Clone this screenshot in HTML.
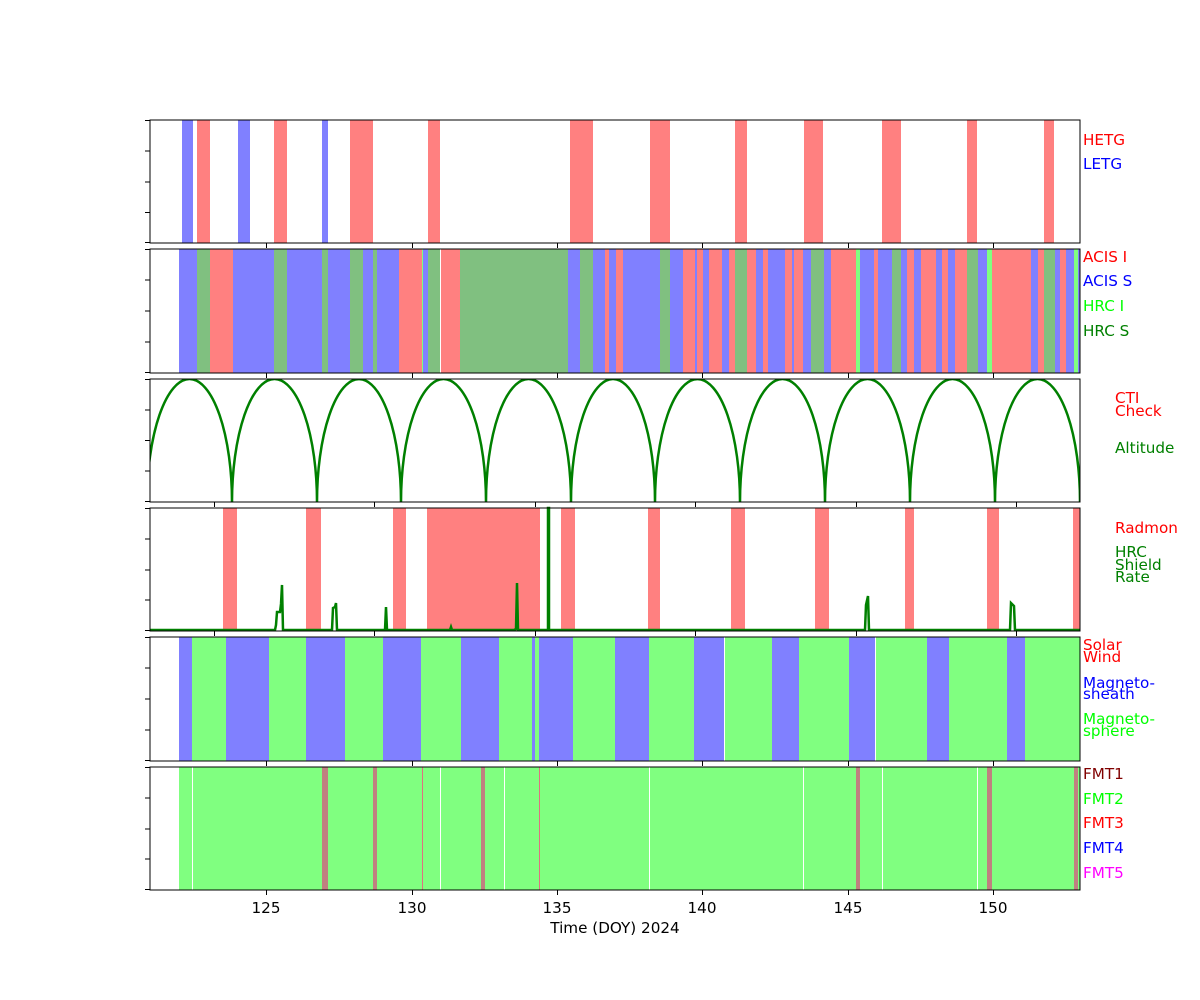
<!DOCTYPE html>
<html><head><meta charset="utf-8"><style>
body{margin:0;background:#fff}
svg{display:block;font-family:"DejaVu Sans","Liberation Sans",sans-serif;font-size:15.2px}
</style></head><body>
<svg width="1200" height="1000" viewBox="0 0 1200 1000" xmlns="http://www.w3.org/2000/svg">
<defs>
<clipPath id="c3"><rect x="150" y="379" width="930" height="123"/></clipPath>
</defs>
<!-- Panel 1 -->
<g fill="#8080ff"><rect x="182" y="120" width="11" height="123"/><rect x="238" y="120" width="12" height="123"/><rect x="322" y="120" width="6" height="123"/></g>
<g fill="#ff8080"><rect x="197" y="120" width="13" height="123"/><rect x="274" y="120" width="13" height="123"/><rect x="350" y="120" width="23" height="123"/><rect x="428" y="120" width="12" height="123"/><rect x="570" y="120" width="23" height="123"/><rect x="650" y="120" width="20" height="123"/><rect x="735" y="120" width="12" height="123"/><rect x="804" y="120" width="19" height="123"/><rect x="882" y="120" width="19" height="123"/><rect x="967" y="120" width="10" height="123"/><rect x="1044" y="120" width="10" height="123"/></g>
<rect x="150" y="120" width="930" height="123" fill="none" stroke="#000"/>
<!-- Panel 2 -->
<g transform="translate(0,249)">
<g fill="#8080ff"><rect x="179" width="18" height="124"/><rect x="233" width="41" height="124"/><rect x="287" width="35" height="124"/><rect x="328" width="22" height="124"/><rect x="363" width="10" height="124"/><rect x="377" width="22" height="124"/><rect x="423" width="5" height="124"/><rect x="568" width="12" height="124"/><rect x="593" width="12" height="124"/><rect x="609" width="7" height="124"/><rect x="623" width="37" height="124"/><rect x="670" width="13" height="124"/><rect x="695" width="2" height="124"/><rect x="703" width="6" height="124"/><rect x="722" width="7" height="124"/><rect x="756" width="7" height="124"/><rect x="768" width="17" height="124"/><rect x="792" width="2" height="124"/><rect x="803" width="8" height="124"/><rect x="824" width="7" height="124"/><rect x="860" width="14" height="124"/><rect x="878" width="14" height="124"/><rect x="901" width="6" height="124"/><rect x="914" width="7" height="124"/><rect x="936" width="6" height="124"/><rect x="948" width="7" height="124"/><rect x="978" width="9" height="124"/><rect x="1031" width="7" height="124"/><rect x="1055" width="5" height="124"/><rect x="1066" width="8" height="124"/><rect x="1078" width="2" height="124"/></g>
<g fill="#80c080"><rect x="197" width="13" height="124"/><rect x="274" width="13" height="124"/><rect x="322" width="6" height="124"/><rect x="350" width="13" height="124"/><rect x="373" width="4" height="124"/><rect x="428" width="12" height="124"/><rect x="460" width="108" height="124"/><rect x="580" width="13" height="124"/><rect x="660" width="10" height="124"/><rect x="735" width="12" height="124"/><rect x="811" width="13" height="124"/><rect x="892" width="9" height="124"/><rect x="967" width="11" height="124"/><rect x="1044" width="11" height="124"/></g>
<g fill="#ff8080"><rect x="210" width="23" height="124"/><rect x="399" width="23" height="124"/><rect x="441" width="19" height="124"/><rect x="605" width="4" height="124"/><rect x="616" width="7" height="124"/><rect x="683" width="12" height="124"/><rect x="697" width="6" height="124"/><rect x="709" width="13" height="124"/><rect x="729" width="6" height="124"/><rect x="747" width="9" height="124"/><rect x="763" width="5" height="124"/><rect x="785" width="7" height="124"/><rect x="794" width="9" height="124"/><rect x="831" width="25" height="124"/><rect x="874" width="4" height="124"/><rect x="907" width="7" height="124"/><rect x="921" width="15" height="124"/><rect x="942" width="6" height="124"/><rect x="955" width="12" height="124"/><rect x="992" width="39" height="124"/><rect x="1038" width="6" height="124"/><rect x="1060" width="6" height="124"/></g>
<g fill="#80ff80"><rect x="422" width="1" height="124"/><rect x="856" width="4" height="124"/><rect x="987" width="5" height="124"/><rect x="1074" width="4" height="124"/></g>
</g>
<rect x="150" y="249" width="930" height="124" fill="none" stroke="#000"/>
<!-- Panel 3 -->
<path clip-path="url(#c3)" fill="none" stroke="#008000" stroke-width="2.5" d="M147,502 A42.5,123 0 0 1 232,502 A42.5,123 0 0 1 317,502 A42,123 0 0 1 401,502 A42.5,123 0 0 1 486,502 A42.5,123 0 0 1 571,502 A42,123 0 0 1 655,502 A42.5,123 0 0 1 740,502 A42.5,123 0 0 1 825,502 A42.5,123 0 0 1 910,502 A42.5,123 0 0 1 995,502 A42.5,123 0 0 1 1080,502"/>
<rect x="150" y="379" width="930" height="123" fill="none" stroke="#000"/>
<!-- Panel 4 -->
<g fill="#ff8080"><rect x="223" y="508" width="14" height="123"/><rect x="306" y="508" width="15" height="123"/><rect x="393" y="508" width="13" height="123"/><rect x="427" y="508" width="113" height="123"/><rect x="561" y="508" width="14" height="123"/><rect x="648" y="508" width="12" height="123"/><rect x="731" y="508" width="14" height="123"/><rect x="815" y="508" width="14" height="123"/><rect x="905" y="508" width="9" height="123"/><rect x="987" y="508" width="12" height="123"/><rect x="1073" y="508" width="7" height="123"/></g>
<g fill="none" stroke="#008000" stroke-width="2.5">
<path d="M150,630 L275,630 L276,625 L277,612 L280,612 L281,604 L282,585 L283,630 L332,630 L333,608 L335,607 L336,603 L337,630 L385,630 L386,607 L387,630 L450,630 L451,627 L452,630 L514,630 L516,629 L517,583 L518,630 L548,630 L548,508 L549,508 L549,630 L865,630 L866,605 L868,596 L869,630 L1010,630 L1011,603 L1014,606 L1015,630 L1080,630"/>
</g>
<rect x="150" y="508" width="930" height="123" fill="none" stroke="#000"/>
<!-- Panel 5 -->
<rect x="192" y="637" width="888" height="124" fill="#80ff80"/>
<g fill="#8080ff"><rect x="179" y="637" width="13" height="124"/><rect x="226" y="637" width="43" height="124"/><rect x="306" y="637" width="39" height="124"/><rect x="383" y="637" width="38" height="124"/><rect x="461" y="637" width="38" height="124"/><rect x="532" y="637" width="3" height="124"/><rect x="539" y="637" width="34" height="124"/><rect x="615" y="637" width="34" height="124"/><rect x="694" y="637" width="30" height="124"/><rect x="772" y="637" width="27" height="124"/><rect x="849" y="637" width="26" height="124"/><rect x="927" y="637" width="22" height="124"/><rect x="1007" y="637" width="18" height="124"/></g>
<g fill="#fff"><rect x="724" y="637" width="1" height="124"/><rect x="875" y="637" width="1" height="124"/></g>
<rect x="150" y="637" width="930" height="124" fill="none" stroke="#000"/>
<!-- Panel 6 -->
<rect x="179" y="767" width="901" height="123" fill="#80ff80"/>
<g fill="#fff"><rect x="192" y="767" width="1" height="123"/><rect x="440" y="767" width="1" height="123"/><rect x="504" y="767" width="1" height="123"/><rect x="649" y="767" width="1" height="123"/><rect x="803" y="767" width="1" height="123"/><rect x="882" y="767" width="1" height="123"/><rect x="977" y="767" width="1" height="123"/></g>
<g fill="#c08080"><rect x="322" y="767" width="6" height="123"/><rect x="373" y="767" width="4" height="123"/><rect x="481" y="767" width="4" height="123"/><rect x="856" y="767" width="4" height="123"/><rect x="987" y="767" width="5" height="123"/><rect x="1074" y="767" width="4" height="123"/></g>
<g fill="#e07080"><rect x="422" y="767" width="1" height="123"/><rect x="539" y="767" width="1" height="123"/></g>
<rect x="150" y="767" width="930" height="123" fill="none" stroke="#000"/>
<!-- ticks -->
<g stroke="#000" stroke-width="1">
<path d="M145,120.5h5M145,151h5M145,182h5M145,212.5h5M145,242.5h5 M145,249.5h5M145,280h5M145,311h5M145,342h5M145,372.5h5 M145,379.5h5M145,410h5M145,440.5h5M145,471h5M145,501.5h5 M145,508.5h5M145,539h5M145,570h5M145,600h5M145,630.5h5 M145,637.5h5M145,668h5M145,699h5M145,730h5M145,760.5h5 M145,767.5h5M145,798h5M145,829h5M145,859h5M145,889.5h5"/>
<path d="M266.5,243v5M412.5,243v5M557.5,243v5M702.5,243v5M848.5,243v5M993.5,243v5 M266.5,373v5M412.5,373v5M557.5,373v5M702.5,373v5M848.5,373v5M993.5,373v5 M214.5,502v5M374.5,502v5M535.5,502v5M695.5,502v5M856.5,502v5M1016.5,502v5 M214.5,631v5M374.5,631v5M535.5,631v5M695.5,631v5M856.5,631v5M1016.5,631v5 M266.5,761v5M412.5,761v5M557.5,761v5M702.5,761v5M848.5,761v5M993.5,761v5 M266.5,890v5M412.5,890v5M557.5,890v5M702.5,890v5M848.5,890v5M993.5,890v5"/>
</g>
<g text-anchor="middle" fill="#000">
<text x="266" y="913">125</text><text x="412" y="913">130</text><text x="557" y="913">135</text><text x="702" y="913">140</text><text x="848" y="913">145</text><text x="993" y="913">150</text>
<text x="615" y="933">Time (DOY) 2024</text>
</g>
<!-- labels -->
<g>
<text x="1083" y="145" fill="#ff0000">HETG</text><text x="1083" y="169" fill="#0000ff">LETG</text>
<text x="1083" y="262" fill="#ff0000">ACIS I</text><text x="1083" y="286" fill="#0000ff">ACIS S</text><text x="1083" y="311" fill="#00ff00">HRC I</text><text x="1083" y="336" fill="#008000">HRC S</text>
<text x="1115" y="403" fill="#ff0000">CTI</text><text x="1115" y="416" fill="#ff0000">Check</text><text x="1115" y="453" fill="#008000">Altitude</text>
<text x="1115" y="533" fill="#ff0000">Radmon</text><text x="1115" y="557" fill="#008000">HRC</text><text x="1115" y="570" fill="#008000">Shield</text><text x="1115" y="582" fill="#008000">Rate</text>
<text x="1083" y="650" fill="#ff0000">Solar</text><text x="1083" y="662" fill="#ff0000">Wind</text><text x="1083" y="688" fill="#0000ff">Magneto-</text><text x="1083" y="699" fill="#0000ff">sheath</text><text x="1083" y="724" fill="#00ff00">Magneto-</text><text x="1083" y="736" fill="#00ff00">sphere</text>
<text x="1083" y="779" fill="#800000">FMT1</text><text x="1083" y="804" fill="#00ff00">FMT2</text><text x="1083" y="828" fill="#ff0000">FMT3</text><text x="1083" y="853" fill="#0000ff">FMT4</text><text x="1083" y="878" fill="#ff00ff">FMT5</text>
</g>
</svg>
</body></html>
